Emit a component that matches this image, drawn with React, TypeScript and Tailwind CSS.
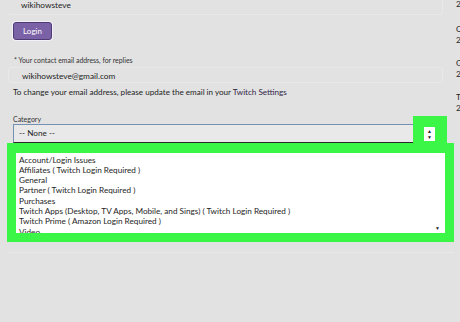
import React from "react";

const categories = [
  "Account/Login Issues",
  "Affiliates ( Twitch Login Required )",
  "General",
  "Partner ( Twitch Login Required )",
  "Purchases",
  "Twitch Apps (Desktop, TV Apps, Mobile, and Sings) ( Twitch Login Required )",
  "Twitch Prime ( Amazon Login Required )",
  "Video",
];

const SupportForm = () => {
  return (
    <div className="flex w-[460px] h-[322px] overflow-hidden bg-[#e2e2e2] text-[#1e1e1e] font-['Lato',sans-serif]">
      <div className="flex w-[456px] shrink-0 flex-col">
        {/* username field, scrolled off the top */}
        <div className="ml-[8px] flex h-[15px] w-[435px] items-start rounded-b-[3px] border-b border-r border-[#e9e9e9] pl-[13px] pt-[1px] text-[8.3px] leading-[9px]">
          wikihowsteve
        </div>

        <button className="ml-[13px] mt-[7px] flex h-[18px] w-[39px] items-center justify-center rounded-[3px] border border-[#4f3b73] bg-[#7b61a5] text-[8px] text-white shadow-[0_0_0_1px_#f3f0f8]">
          Login
        </button>

        <div className="ml-[14px] mt-[17px] text-[6.9px] leading-[7px] text-[#333]">
          * Your contact email address, for replies
        </div>

        <div className="ml-[8px] mt-[3px] flex h-[16px] w-[435px] items-end rounded-[3px] border border-[#e9e9e9] pb-[1px] pl-[13px] text-[8.3px] leading-[10px]">
          wikihowsteve@gmail.com
        </div>

        <div className="ml-[13px] mt-[4px] text-[8.1px] leading-[10px]">
          To change your email address, please update the email in your{" "}
          <span className="text-[#2f2546]">Twitch Settings</span>
        </div>

        {/* category select */}
        <div className="mt-[18px] flex items-end">
          <div className="flex w-[413px] flex-col pl-[13px]">
            <div className="text-[7px] leading-[8px] text-[#333]">Category</div>
            <div className="mt-[1px] flex h-[19px] w-[407px] items-center border-l border-t border-[#7690b3] border-b-[#2a2a2a] border-b bg-[#e9e9e9] pl-[5px] text-[8.2px]">
              -- None --
            </div>
          </div>
          <div className="flex h-[27px] w-[34px] items-start bg-[#3cf647] pl-[11px] pt-[11px]">
            <div className="flex h-[14px] w-[11px] flex-col items-center justify-center gap-[1px] bg-white text-[5px] leading-[5px] text-[#222]">
              <span>▲</span>
              <span>▼</span>
            </div>
          </div>
        </div>

        <div className="ml-[7px] flex h-[99px] w-[447px] flex-col bg-[#3cf647] px-[9px] pt-[10px]">
          <div className="relative h-[80px] overflow-hidden bg-white pl-[3px] pt-[1.5px]">
            {categories.map((c) => (
              <div key={c} className="whitespace-nowrap text-[8.2px] leading-[10.3px]">
                {c}
              </div>
            ))}
            <span className="absolute bottom-[2px] right-[5px] text-[5px] leading-[5px] text-[#222]">▼</span>
          </div>
        </div>

        <div className="ml-[7px] mt-[10px] h-px w-[447px] bg-[#e9e9e9]" />
      </div>

      {/* ticket column, cut off at the right edge */}
      <div className="w-[4px] shrink-0 overflow-hidden whitespace-nowrap text-[8.3px] leading-[11px]">
        <div className="mt-[-1px]">2017-05-01</div>
        <div className="mt-[14px]">Category</div>
        <div>2017-04-12</div>
        <div className="mt-[12px]">General</div>
        <div>2017-03-08</div>
        <div className="mt-[12px]">Twitch</div>
        <div>2017-02-20</div>
      </div>
    </div>
  );
};

export default function App() {
  return <SupportForm />;
}
